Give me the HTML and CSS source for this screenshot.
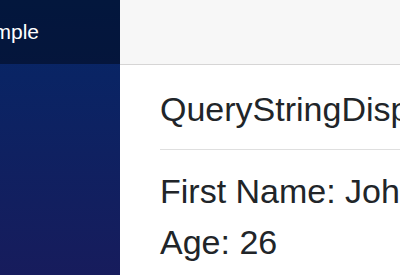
FILE: index.html
```html
<!DOCTYPE html>
<html lang="en">
<head>
  <meta charset="UTF-8">
  <title>QueryStringDisplay</title>
  <link rel="stylesheet" href="styles.css">
</head>
<body>
  <div class="page">
    <div class="sidebar">
      <div class="brand-row">
        <a class="navbar-brand" href="#">BlazorSample</a>
      </div>
    </div>
    <main>
      <div class="top-row"></div>
      <article class="content">
        <h3>QueryStringDisplay</h3>
        <hr>
        <p>First Name: John</p>
        <p>Age: 26</p>
      </article>
    </main>
  </div>
</body>
</html>
```

FILE: styles.css
```css
html, body {
  margin: 0;
  font-family: "Liberation Sans", Arial, sans-serif;
  color: #212529;
  overflow: hidden;
}

.page {
  display: flex;
  height: 275px;
}

.sidebar {
  width: 120px;
  flex-shrink: 0;
  overflow: hidden;
  background-image: linear-gradient(180deg, rgb(5, 39, 103) 0, #3a0647 820px);
}

.brand-row {
  height: 64px;
  display: flex;
  align-items: center;
  justify-content: flex-end;
  padding-right: 81px;
  background-color: rgba(0, 0, 0, 0.4);
}

.navbar-brand {
  color: white;
  font-size: 21px;
  text-decoration: none;
  white-space: nowrap;
  flex-shrink: 0;
}

main {
  flex: 1;
  min-width: 0;
  overflow: hidden;
}

.top-row {
  height: 64px;
  background-color: #f7f7f7;
  border-bottom: 1px solid #d6d5d5;
}

.content {
  padding: 24px 0 0 40px;
  white-space: nowrap;
}

h3 {
  margin: 0;
  font-size: 34px;
  font-weight: normal;
  line-height: 1.2;
}

hr {
  margin: 19px 0 16px;
  border: 0;
  border-top: 1px solid #dfdfdf;
}

p {
  margin: 0;
  font-size: 34px;
  line-height: 1.5;
}
```
